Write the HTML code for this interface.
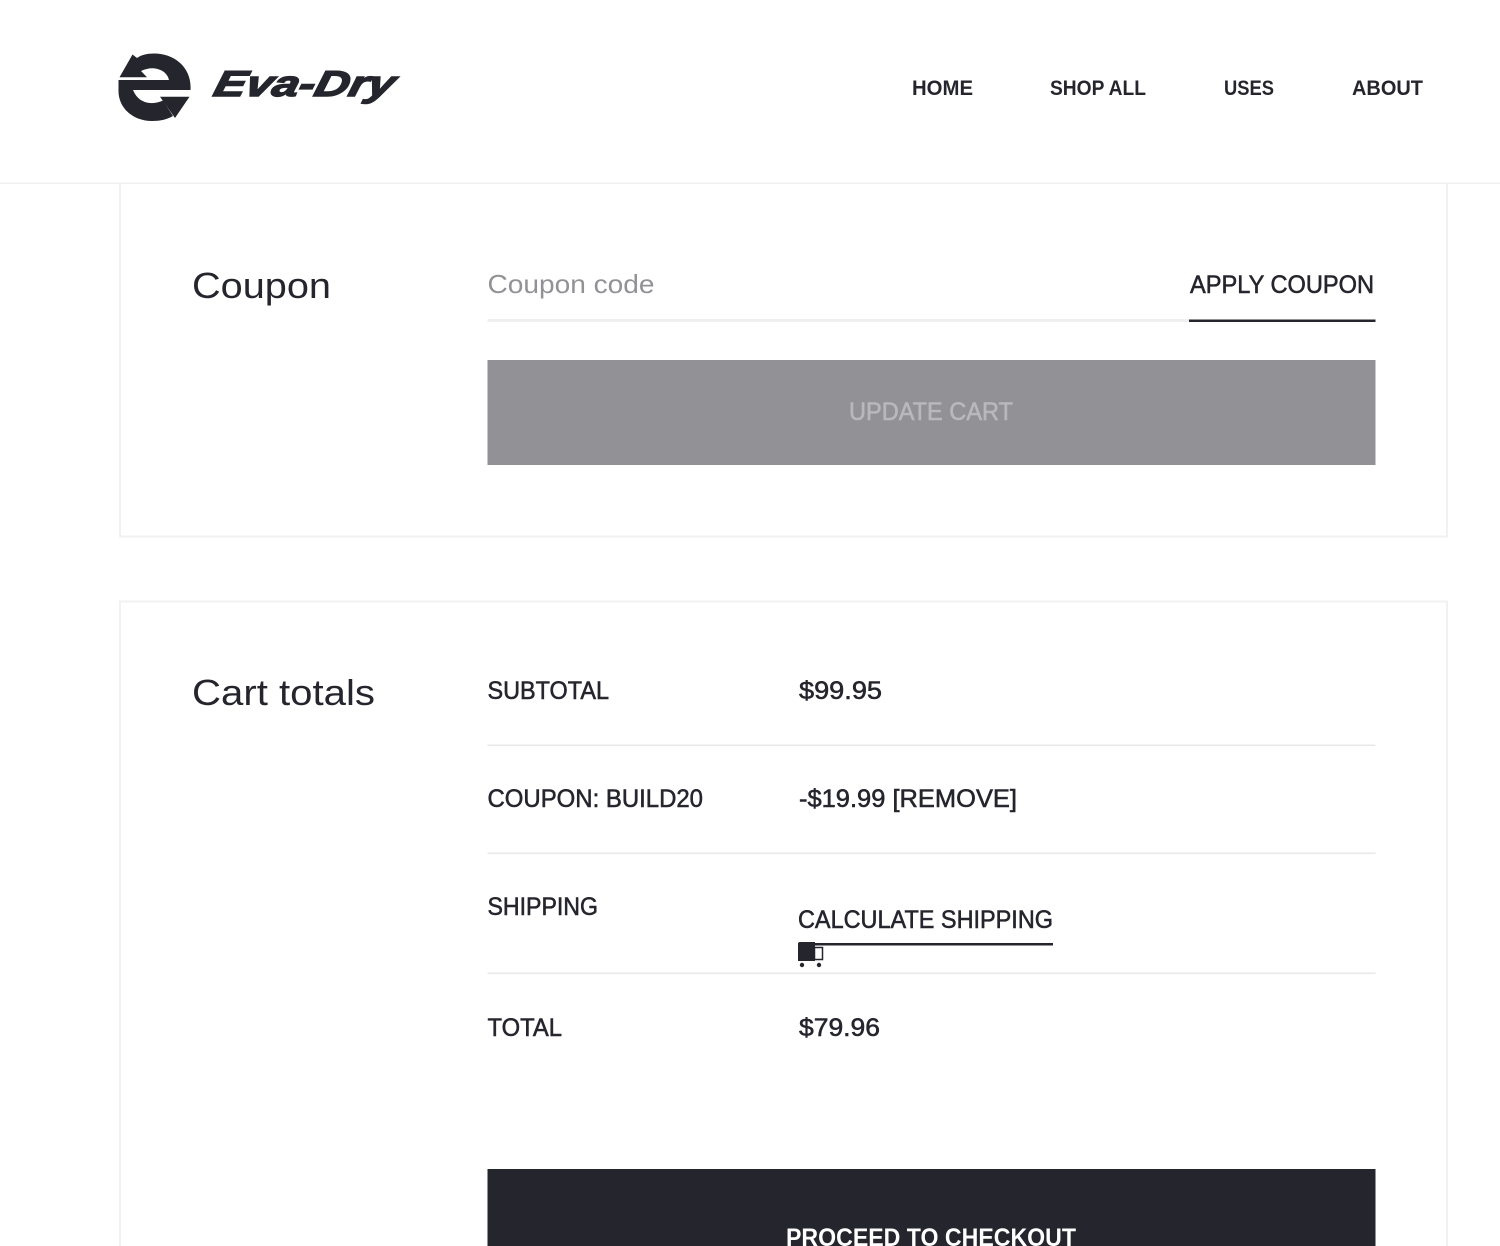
<!DOCTYPE html>
<html lang="en"><head><meta charset="utf-8"><title>Cart</title>
<style>
html,body{margin:0;padding:0;background:#fff;width:1500px;height:1246px;overflow:hidden}
svg{display:block}
text{font-family:"Liberation Sans",sans-serif;fill:#25252d}
.m{stroke:#25252d;stroke-width:.55px}
.n{font-size:21.500px;font-weight:700}
.b{font-size:25px}
.h{font-size:36px}
</style></head><body>
<svg width="1500" height="1246" viewBox="0 0 1500 1246" xmlns="http://www.w3.org/2000/svg">
<rect width="1500" height="1246" fill="#fff"/>
<rect x="0" y="182.500" width="1500" height="1.500" fill="#f0f0f0"/>
<!-- cards -->
<path d="M120 184V536.500H1447V184" fill="none" stroke="#f1f1f1" stroke-width="2"/>
<path d="M120 1246V601.500H1447V1246" fill="none" stroke="#f1f1f1" stroke-width="2"/>
<!-- logo -->
<g fill="#25252d">
<path d="M132.500 54.500L119.500 77.300H147L141 71Q154 65 164 72Q168 75.500 169 80H118.500V90H190.500C192 68 175 53.500 154 53.500C147 53.500 141 55 137 58Z"/>
<path d="M118.500 90C118 108 133 121 152 121C160 121 167 119.500 173 116L163 100.500Q157 103.500 150 103Q138 102 133 90Z"/>
<path d="M160 96.700H189.500L175 118Z"/>
</g>
<g transform="translate(212 96) skewX(-14)">
<text x="0" y="0" font-size="36" font-weight="700" font-style="italic" textLength="180" lengthAdjust="spacingAndGlyphs" style="stroke:#25252d;stroke-width:1.500px">Eva-Dry</text>
</g>
<!-- nav -->
<text class="n" x="912" y="95" textLength="61" lengthAdjust="spacingAndGlyphs">HOME</text>
<text class="n" x="1050" y="95" textLength="96" lengthAdjust="spacingAndGlyphs">SHOP ALL</text>
<text class="n" x="1224" y="95" textLength="50" lengthAdjust="spacingAndGlyphs">USES</text>
<text class="n" x="1352" y="95" textLength="71" lengthAdjust="spacingAndGlyphs">ABOUT</text>
<!-- coupon -->
<text class="h" x="192" y="298" textLength="139" lengthAdjust="spacingAndGlyphs">Coupon</text>
<text x="487.500" y="293" font-size="26" textLength="167" lengthAdjust="spacingAndGlyphs" style="fill:#929296">Coupon code</text>
<text class="b m" x="1190" y="293" textLength="184" lengthAdjust="spacingAndGlyphs">APPLY COUPON</text>
<rect x="487.500" y="319" width="701.500" height="3" fill="#efefef"/>
<rect x="1189" y="319.500" width="186.500" height="2.500" fill="#25252d"/>
<rect x="487.500" y="360" width="888" height="105" fill="#929296"/>
<text class="b m" x="849" y="420" textLength="164" lengthAdjust="spacingAndGlyphs" style="fill:#b9b9bb;stroke:#b9b9bb">UPDATE CART</text>
<!-- totals -->
<text class="h" x="192" y="705" textLength="183" lengthAdjust="spacingAndGlyphs">Cart totals</text>
<text class="b m" x="487.500" y="699" textLength="121.500" lengthAdjust="spacingAndGlyphs">SUBTOTAL</text>
<text class="b m" x="799" y="699" textLength="83" lengthAdjust="spacingAndGlyphs">$99.95</text>
<rect x="487.500" y="744.500" width="888" height="1.500" fill="#e8e8e8"/>
<text class="b m" x="487.500" y="807" textLength="215.500" lengthAdjust="spacingAndGlyphs">COUPON: BUILD20</text>
<text class="b m" x="799" y="807" textLength="218" lengthAdjust="spacingAndGlyphs">-$19.99 [REMOVE]</text>
<rect x="487.500" y="852.500" width="888" height="1.500" fill="#e8e8e8"/>
<text class="b m" x="487.500" y="915" textLength="110.500" lengthAdjust="spacingAndGlyphs">SHIPPING</text>
<text class="b m" x="798" y="928" textLength="255" lengthAdjust="spacingAndGlyphs">CALCULATE SHIPPING</text>
<rect x="798" y="943" width="255" height="2.500" fill="#25252d"/>
<path d="M800 942H815V961H798V944Q798 942 800 942Z" fill="#25252d"/>
<rect x="814.500" y="947.500" width="8" height="12" fill="#fff" stroke="#25252d" stroke-width="1.500"/>
<circle cx="802" cy="965" r="2.200" fill="#25252d"/>
<circle cx="819" cy="965" r="2.200" fill="#25252d"/>
<rect x="487.500" y="972.500" width="888" height="1.500" fill="#e8e8e8"/>
<text class="b m" x="487.500" y="1036" textLength="74.500" lengthAdjust="spacingAndGlyphs">TOTAL</text>
<text class="b m" x="799" y="1036" textLength="81" lengthAdjust="spacingAndGlyphs">$79.96</text>
<rect x="487.500" y="1169" width="888" height="77" fill="#25252d"/>
<text x="786" y="1246" font-size="25" font-weight="700" textLength="290" lengthAdjust="spacingAndGlyphs" style="fill:#fff">PROCEED TO CHECKOUT</text>
</svg>
</body></html>
